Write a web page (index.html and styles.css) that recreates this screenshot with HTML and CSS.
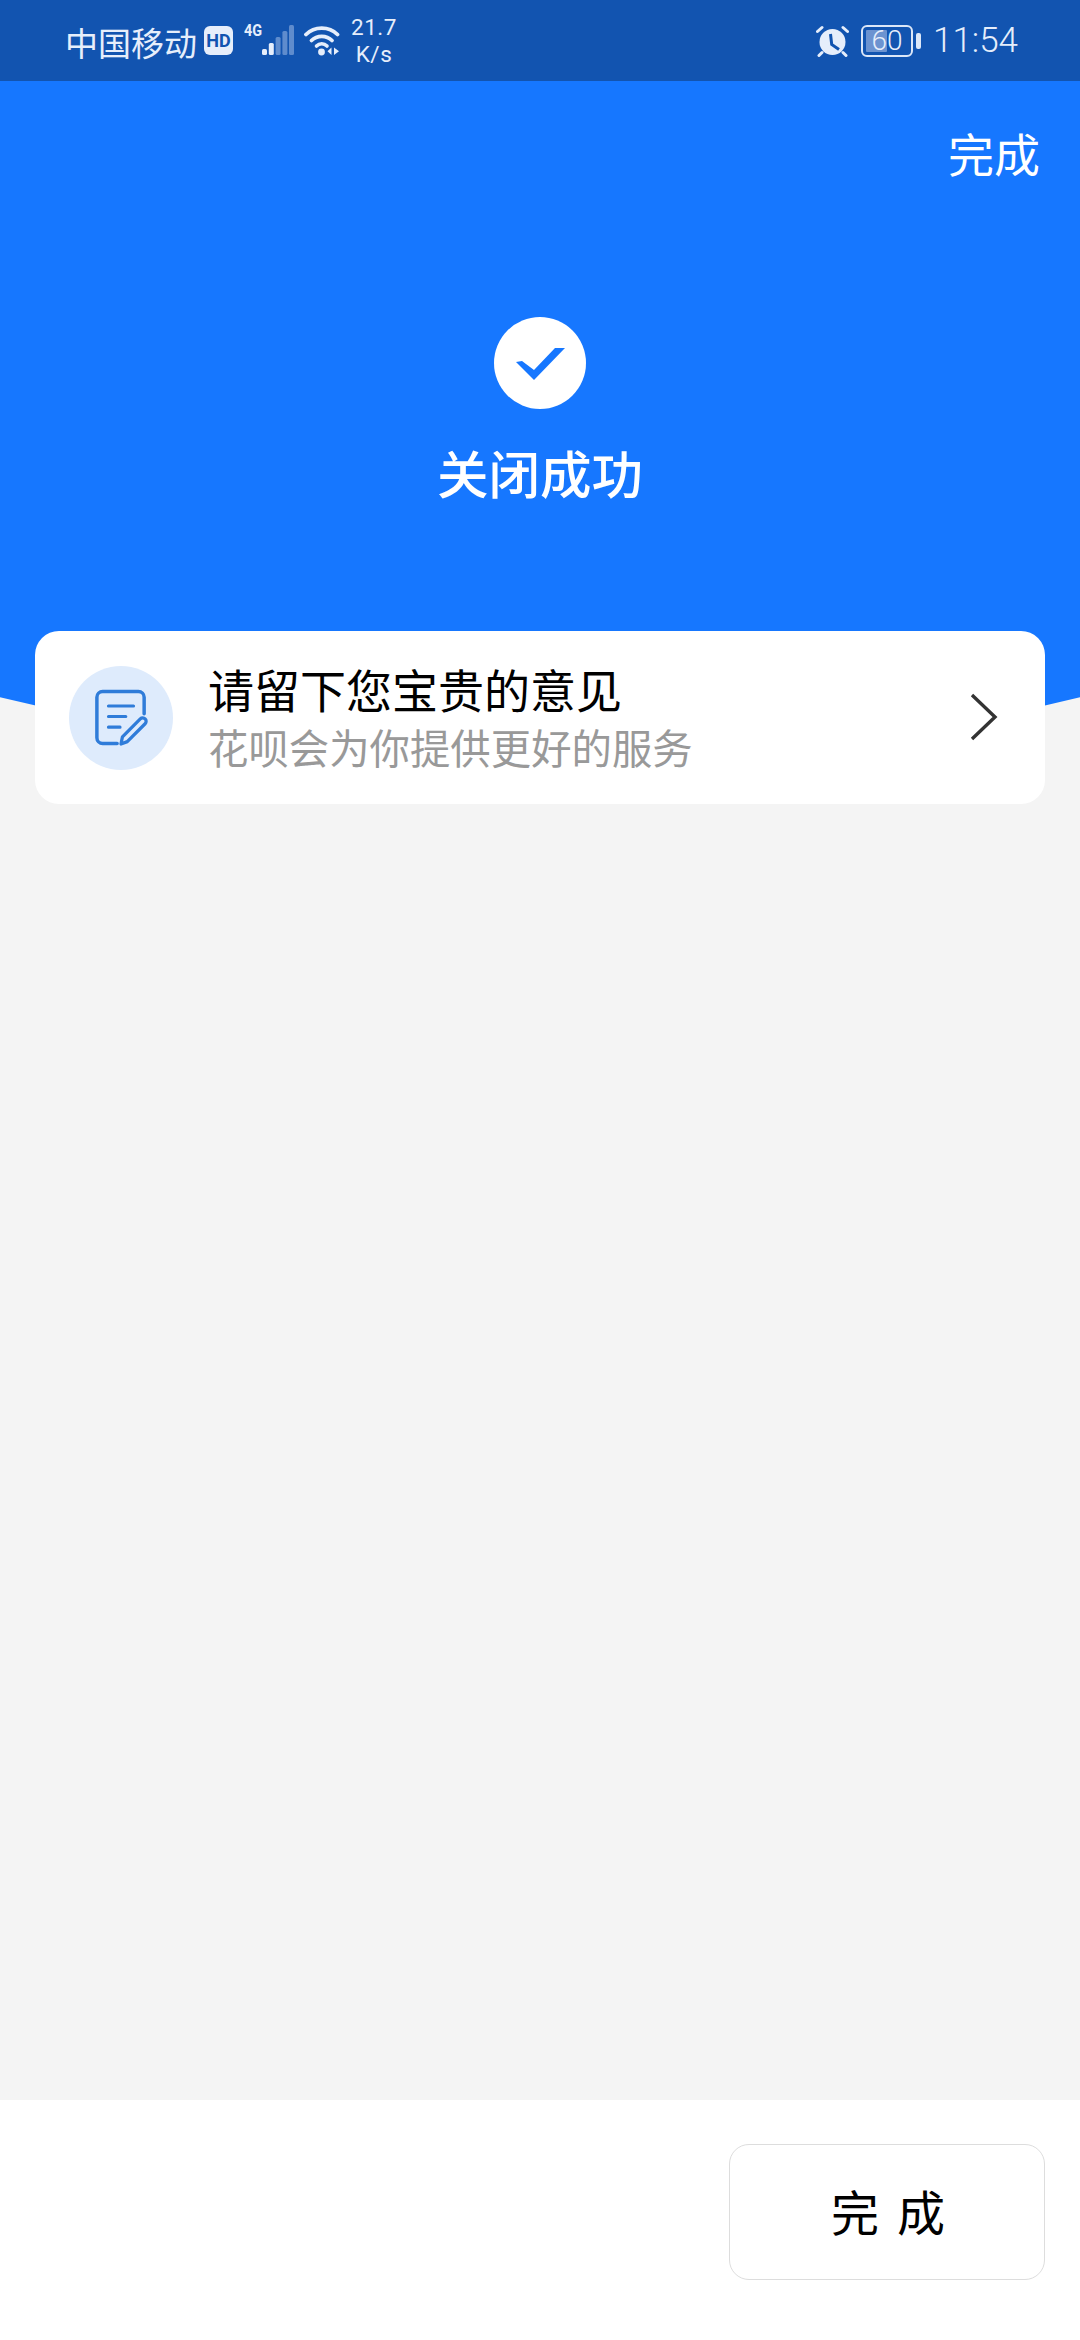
FILE: index.html
```html
<!DOCTYPE html>
<html lang="zh-CN">
<head>
<meta charset="utf-8">
<title>关闭成功</title>
<link rel="stylesheet" href="styles.css">
</head>
<body>
<div class="page">
  <header class="status">
    <div class="status-left">
      <span class="carrier">中国移动</span>
      <span class="hd">HD</span>
      <span class="net">
        <span class="net-label">4G</span>
        <svg class="signal" width="32" height="31" viewBox="0 0 32 31">
          <rect x="0" y="24" width="5" height="6" rx="1.500" fill="#e6eefb"/>
          <rect x="6.800" y="18" width="5" height="12" rx="1.500" fill="#e6eefb"/>
          <rect x="13.600" y="12" width="5" height="18" rx="1.500" fill="#5f8ccd"/>
          <rect x="20.400" y="6" width="5" height="24" rx="1.500" fill="#5f8ccd"/>
          <rect x="27" y="0" width="5" height="30" rx="1.500" fill="#5f8ccd"/>
        </svg>
      </span>
      <svg class="wifi" width="37" height="31" viewBox="0 0 37 31">
        <path d="M2 9.500C10.500 1 25 1 33.500 9.500" fill="none" stroke="#e6eefb" stroke-width="3.800" stroke-linecap="round"/>
        <path d="M7.500 15.500C13 10 22.500 10 28 15.500" fill="none" stroke="#e6eefb" stroke-width="3.800" stroke-linecap="round"/>
        <path d="M12.500 21C15.500 18 20 18 23 21" fill="none" stroke="#e6eefb" stroke-width="3.600" stroke-linecap="round"/>
        <circle cx="17.500" cy="27" r="3.400" fill="#e6eefb"/>
        <path d="M27.500 22.500v7.500l-4-3.700zM30 22.500v7.500l5-3.700z" fill="#e6eefb"/>
      </svg>
      <span class="speed"><span>21.7</span><span>K/s</span></span>
    </div>
    <div class="status-right">
      <svg class="alarm" width="33" height="32" viewBox="0 0 33 32">
        <circle cx="16.500" cy="17" r="13" fill="#e6eefb"/>
        <path d="M1.500 6.500L6 2.500M31.500 6.500L27 2.500M6 27.500l-3 3M27 27.500l3 3" stroke="#e6eefb" stroke-width="3" stroke-linecap="round"/>
        <path d="M14.500 9l1.200 10.500 7.300 5" fill="none" stroke="#1254b0" stroke-width="3"/>
      </svg>
      <span class="battery">
        <span class="battery-body"><span class="battery-fill" style="width:50%"></span><span class="battery-num">60</span></span>
        <span class="battery-tip"></span>
      </span>
      <span class="time">11:54</span>
    </div>
  </header>

  <section class="hero">
    <div class="hero-bar"><span class="hero-done">完成</span></div>
    <div class="result-icon">
      <svg width="50" height="38" viewBox="0 0 50 38">
        <path d="M1 18L7 17L19 26L40 4H50L19 36Z" fill="#1677ff"/>
      </svg>
    </div>
    <h1 class="result-title">关闭成功</h1>
  </section>

  <main class="content">
    <div class="card">
      <div class="card-icon">
        <svg width="54" height="59" viewBox="0 0 56 60">
          <path d="M24 57H9a6 6 0 0 1-6-6V9a6 6 0 0 1 6-6h37a6 6 0 0 1 6 6v17" fill="none" stroke="#2f7cd9" stroke-width="3.600" stroke-linecap="round"/>
          <path d="M15 18H41M15 29H33M15 40H27" fill="none" stroke="#2f7cd9" stroke-width="3.200" stroke-linecap="round"/>
          <path d="M28 57.500l1.500-7.500L48 31.500a3.500 3.500 0 0 1 5 0 3.500 3.500 0 0 1 0 5L34.500 55z" fill="none" stroke="#2f7cd9" stroke-width="3.400" stroke-linejoin="round"/>
        </svg>
      </div>
      <div class="card-text">
        <div class="card-title">请留下您宝贵的意见</div>
        <div class="card-sub">花呗会为你提供更好的服务</div>
      </div>
      <svg class="chevron" width="30" height="48" viewBox="0 0 30 48">
        <path d="M3 2L26 24L3 46" fill="none" stroke="#333333" stroke-width="3.400"/>
      </svg>
    </div>
  </main>

  <footer class="footer">
    <button class="done-btn">完成</button>
  </footer>
</div>
</body>
</html>
```
FILE: styles.css
```css
* { box-sizing: border-box; }
html, body { margin: 0; padding: 0; }
body {
  font-family: "Noto Sans CJK SC", "Noto Sans", sans-serif;
  background: #f4f4f4;
}
.page {
  width: 1080px;
  height: 2340px;
  display: flex;
  flex-direction: column;
  overflow: hidden;
}
.status {
  height: 81px;
  flex: none;
  background: #1254b0;
  color: #e6eefb;
  display: flex;
  justify-content: space-between;
  align-items: center;
  padding: 0 62px 0 65px;
}
.status-left, .status-right { display: flex; align-items: center; }
.carrier { font-size: 33px; line-height: 40px; width: 132px; white-space: nowrap; margin-top: 2px; }
.hd {
  margin-left: 7px;
  width: 29px;
  height: 29px;
  border-radius: 6px;
  background: #e6eefb;
  color: #1254b0;
  font: 700 18px/29px Roboto, sans-serif;
  text-align: center;
}
.net { position: relative; margin-left: 29px; width: 32px; height: 31px; display: block; }
.net-label {
  position: absolute;
  left: -18px;
  top: -3px;
  font: 700 17px/17px Roboto, sans-serif;
  transform: scaleX(.85);
  transform-origin: left;
}
.signal { display: block; }
.wifi { margin-left: 10px; display: block; }
.speed {
  margin-left: 10px;
  width: 46px;
  display: flex;
  flex-direction: column;
  align-items: center;
  font: 400 22.500px/27px Roboto, sans-serif;
  letter-spacing: .5px;
}
.alarm { display: block; }
.battery { display: flex; align-items: center; margin-left: 12px; }
.battery-body {
  position: relative;
  width: 52px;
  height: 32px;
  border: 2.500px solid #dce7f8;
  border-radius: 6px;
  padding: 3px;
  display: block;
}
.battery-fill { display: block; height: 100%; background: #6c93d0; border-radius: 1px; }
.battery-num {
  position: absolute;
  inset: 0;
  text-align: center;
  font: 300 28px/27px Roboto, sans-serif;
  color: #e6eefb;
}
.battery-tip { width: 5px; height: 16px; margin-left: 3px; border-radius: 2px; background: #dce7f8; }
.time {
  margin-left: 12px;
  font: 300 35px/40px Roboto, sans-serif;
}

.hero {
  height: 681px;
  flex: none;
  background: #1677ff;
  clip-path: circle(2286px at 50% calc(100% - 2286px));
  color: #fff;
  display: flex;
  flex-direction: column;
  align-items: center;
}
.hero-bar {
  align-self: stretch;
  height: 106px;
  padding: 39px 40px 0 0;
  display: flex;
  justify-content: flex-end;
}
.hero-done { font-size: 46px; line-height: 64px; }
.result-icon {
  margin-top: 130px;
  width: 92px;
  height: 92px;
  border-radius: 50%;
  background: #fff;
  display: flex;
  align-items: center;
  justify-content: center;
}
.result-title {
  margin: 28px 0 0;
  font-size: 51.500px;
  line-height: 70px;
  font-weight: 500;
}

.content {
  flex: 1;
  padding: 0 35px;
  background: #f4f4f4;
}
.card {
  position: relative;
  margin-top: -131px;
  height: 173px;
  background: #fff;
  border-radius: 24px;
  display: flex;
  align-items: center;
  padding: 0 46px 0 34px;
}
.card-icon {
  width: 104px;
  height: 104px;
  border-radius: 50%;
  background: #deebfc;
  display: flex;
  align-items: center;
  justify-content: center;
  flex: none;
}
.card-text { flex: 1; margin-left: 35px; margin-top: -3px; }
.card-title { font-size: 46px; line-height: 60px; color: #000; }
.card-sub { font-size: 40.400px; line-height: 56px; color: #999; margin-top: 1px; }
.chevron { display: block; flex: none; margin-top: -2px; }

.footer {
  flex: none;
  height: 240px;
  background: #fff;
  display: flex;
  justify-content: flex-end;
  padding: 44px 35px 0 0;
}
.done-btn {
  width: 316px;
  height: 136px;
  border: 1.500px solid #ddd;
  border-radius: 20px;
  background: #fff;
  font-family: inherit;
  font-size: 48px;
  line-height: 60px;
  letter-spacing: 18px;
  text-indent: 20px;
  color: #000;
  padding: 0 0 5px;
}
```
